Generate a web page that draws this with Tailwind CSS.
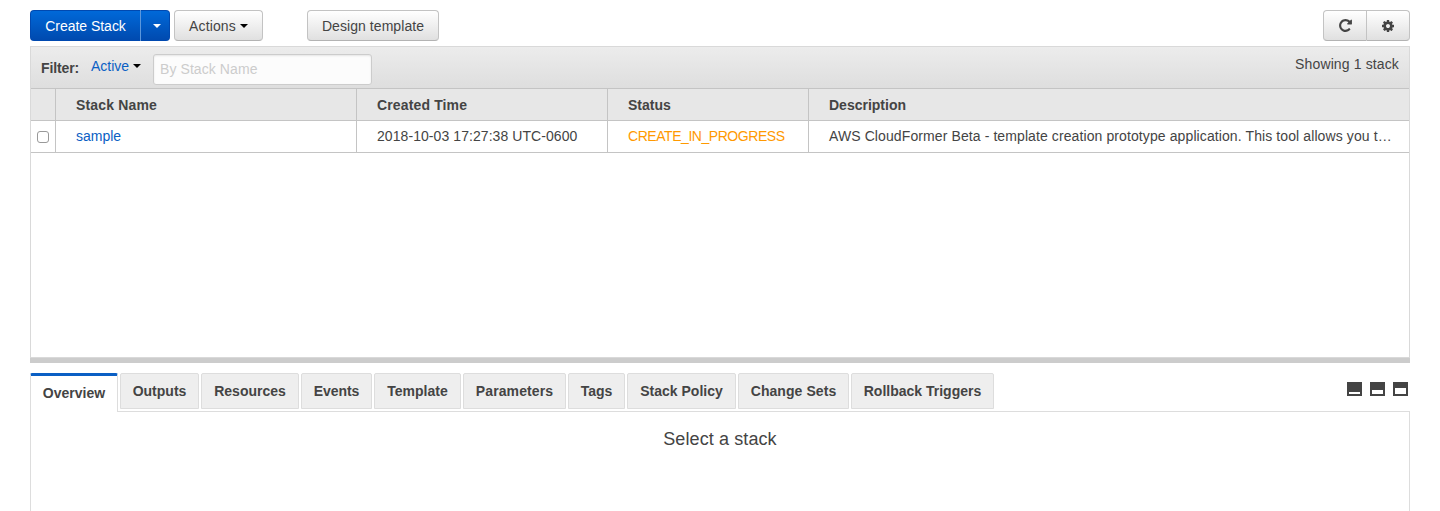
<!DOCTYPE html>
<html lang="en">
<head>
<meta charset="utf-8">
<title>CloudFormation stacks</title>
<script src="https://cdn.jsdelivr.net/npm/@tailwindcss/browser@4"></script>
</head>
<body class="h-[511px] overflow-hidden bg-white px-[30px] pt-[10px] font-['Liberation_Sans',sans-serif] text-sm leading-[20px] text-[#444]">
<header class="flex h-[31px] items-stretch">
  <button class="flex w-[110px] items-center justify-center rounded-l border border-r-0 border-[#0049b0] bg-linear-to-b from-[#0069d9] to-[#004aaf] pt-px text-white"><span class="whitespace-nowrap tracking-[-0.02px]">Create Stack</span></button>
  <button class="flex w-[30px] items-center justify-center rounded-r border border-[#0049b0] border-l-[#5c97dc] bg-linear-to-b from-[#0069d9] to-[#004aaf] pl-[4px]"><svg class="h-1 w-2" viewBox="0 0 8 4"><path d="M0 0h8L4 4z" fill="#fff"/></svg></button>
  <button class="ml-1 flex w-[89px] items-center justify-center gap-1 rounded border border-[#c3c3c3] border-b-[#b3b3b3] bg-linear-to-b from-white to-[#e0e0e0] pt-px"><span class="tracking-[0.12px]">Actions</span><svg class="h-1 w-2" viewBox="0 0 8 4"><path d="M0 0h8L4 4z" fill="#000"/></svg></button>
  <button class="ml-[44px] flex w-[132px] items-center justify-center rounded border border-[#c3c3c3] border-b-[#b3b3b3] bg-linear-to-b from-white to-[#e0e0e0] pt-px tracking-[0.06px]">Design template</button>
  <button aria-label="Refresh" class="ml-auto flex w-[44px] items-center justify-center rounded-l border border-[#c3c3c3] border-b-[#b3b3b3] bg-linear-to-b from-white to-[#e0e0e0]"><svg class="h-[15px] w-[15px]" viewBox="0 0 1792 1792"><path fill="#444" d="M1664 256v448q0 26-19 45t-45 19h-448q-42 0-59-40-17-39 14-69l138-138q-148-137-349-137-104 0-198.500 40.500t-163.500 109.500-109.500 163.500-40.500 198.500 40.500 198.500 109.500 163.500 163.500 109.500 198.500 40.500q119 0 225-52t179-147q7-10 23-12 15 0 25 9l137 138q9 8 9.500 20.500t-7.500 22.500q-109 132-264 204.500t-327 72.500q-156 0-298-61t-245-164-164-245-61-298 61-298 164-245 245-164 298-61q147 0 284.500 55.500t244.500 156.500l130-129q29-31 70-14 39 17 39 59z"/></svg></button>
  <button aria-label="Settings" class="flex w-[43px] items-center justify-center rounded-r border border-l-0 border-[#c3c3c3] border-b-[#b3b3b3] bg-linear-to-b from-white to-[#e0e0e0]"><svg class="h-[14px] w-[14px]" viewBox="0 0 1792 1792"><path fill="#444" d="M1152 896q0-106-75-181t-181-75-181 75-75 181 75 181 181 75 181-75 75-181zm512-109v222q0 12-8 23t-20 13l-185 28q-19 54-39 91 35 50 107 138 10 12 10 25t-9 23q-27 37-99 108t-94 71q-12 0-26-9l-138-108q-44 23-91 38-16 136-29 186-7 28-36 28h-222q-14 0-24.500-8.500t-11.500-21.500l-28-184q-49-16-90-37l-141 107q-10 9-25 9-14 0-25-11-126-114-165-168-7-10-7-23 0-12 8-23 15-21 51-66.500t54-70.500q-27-50-41-99l-183-27q-13-2-21-12.500t-8-23.500v-222q0-12 8-23t19-13l186-28q14-46 39-92-40-57-107-138-10-12-10-24 0-10 9-23 26-36 98.500-107.500t94.500-71.500q13 0 26 10l138 107q44-23 91-38 16-136 29-186 7-28 36-28h222q14 0 24.500 8.500t11.500 21.500l28 184q49 16 90 37l142-107q9-9 24-9 13 0 25 10 129 119 165 170 7 8 7 22 0 12-8 23-15 21-51 66.500t-54 70.500q26 50 41 98l183 28q13 2 21 12.500t8 23.500z"/></svg></button>
</header>
<section class="mt-[5px] flex h-[312px] flex-col border border-[#d9d9d9]">
  <div class="flex h-[42px] shrink-0 items-start border-b border-[#c4c4c4] bg-linear-to-b from-[#ececec] to-[#dedede]">
    <b class="ml-[10px] mt-[11px] w-[50px] tracking-[-0.12px]">Filter:</b>
    <span class="mt-[9px] flex w-[62px] items-center gap-1 text-[#0a60c4]">Active <svg class="h-1 w-2" viewBox="0 0 8 4"><path d="M0 0h8L4 4z" fill="#000"/></svg></span>
    <input class="mt-[7px] h-[31px] w-[219px] rounded-[3px] border border-[#ccc] bg-[#fcfcfc] px-[6px] pb-[2px] tracking-[0.08px] inset-shadow-[0_1px_2px_#00000018] placeholder:text-[#ccc]" placeholder="By Stack Name">
    <span class="ml-auto mr-[10px] mt-[7px] tracking-[0.13px]">Showing 1 stack</span>
  </div>
  <div class="grid shrink-0 grid-cols-[25px_301px_251px_201px_1fr] border-b border-[#c4c4c4] bg-[#e7e7e7] font-bold *:h-[31px] *:border-r *:border-[#c4c4c4] *:pl-5 *:pt-[6px]">
    <div></div><div class="tracking-[0.16px]">Stack Name</div><div class="tracking-[0.14px]">Created Time</div><div>Status</div><div class="border-r-0!">Description</div>
  </div>
  <div class="grid shrink-0 grid-cols-[25px_301px_251px_201px_1fr] border-b border-[#c4c4c4] *:h-[31px] *:border-r *:border-[#c4c4c4] *:pl-5 *:pt-[5px]">
    <div class="pl-[6px]! pt-[10px]!"><input type="checkbox" class="block h-3 w-3 appearance-none rounded-[3px] border border-[#999] bg-white"></div>
    <div class="text-[#0a60c4]">sample</div>
    <div class="tracking-[0.07px]">2018-10-03 17:27:38 UTC-0600</div>
    <div class="tracking-[-0.45px] text-[#ff9900]">CREATE_IN_PROGRESS</div>
    <div class="border-r-0! whitespace-nowrap tracking-[0.1px]">AWS CloudFormer Beta - template creation prototype application. This tool allows you t…</div>
  </div>
</section>
<div class="h-[5px] bg-[#ccc]"></div>
<nav class="mt-[10px] flex h-[38px] items-start gap-[2px] font-bold *:flex *:h-9 *:items-center *:justify-center *:whitespace-nowrap *:rounded-t-[2px] *:border *:border-[#ddd] *:bg-[#eee]">
  <div class="relative z-10 h-[39px]! w-[88px] border-t-[3px]! border-b-0! border-t-[#0a5fc4]! bg-white! pb-[2px]">Overview</div>
  <div class="w-[79px]">Outputs</div>
  <div class="w-[98px]">Resources</div>
  <div class="w-[71px] tracking-[-0.1px]">Events</div>
  <div class="w-[87px]">Template</div>
  <div class="w-[103px] tracking-[0.1px]">Parameters</div>
  <div class="w-[57px]">Tags</div>
  <div class="w-[109px]">Stack Policy</div>
  <div class="w-[111px] tracking-[0.07px]">Change Sets</div>
  <div class="w-[143px]">Rollback Triggers</div>
  <span class="ml-auto mr-[2px] mt-[9px] h-[14px]! gap-2 border-0! bg-transparent!">
    <svg class="h-[14px] w-[15px]" viewBox="0 0 15 14"><path d="M0 0h15v14H0z" fill="#444"/><path d="M2 10h11v2H2z" fill="#fff"/></svg>
    <svg class="h-[14px] w-[15px]" viewBox="0 0 15 14"><path d="M0 0h15v14H0z" fill="#444"/><path d="M2 8h11v4H2z" fill="#fff"/></svg>
    <svg class="h-[14px] w-[15px]" viewBox="0 0 15 14"><path d="M0 0h15v14H0z" fill="#444"/><path d="M2 6h11v6H2z" fill="#fff"/></svg>
  </span>
</nav>
<main class="h-[110px] border border-b-0 border-[#ddd] pt-[17px] text-center text-lg leading-[20px] tracking-[0.1px]">Select a stack</main>
</body>
</html>
